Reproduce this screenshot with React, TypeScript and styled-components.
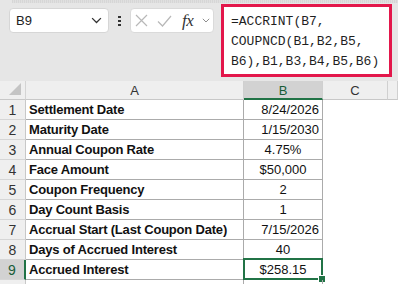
import React from "react";
import styled, { createGlobalStyle } from "styled-components";

const GlobalStyle = createGlobalStyle`
  html, body {
    margin: 0;
    padding: 0;
    background: #ffffff;
    font-family: "Liberation Sans", Arial, sans-serif;
  }
`;

const Page = styled.div`
  width: 398px;
  height: 284px;
  overflow: hidden;
  background: #ffffff;
`;

const TopArea = styled.div`
  height: 81px;
  background: #e6e6e6;
  position: relative;
`;

const Ribbon = styled.div`
  height: 3px;
  margin-left: 12px;
  background: repeating-linear-gradient(90deg, #d6d6d6 0 1px, #e0e0e0 1px 2px);
`;

const FormulaRow = styled.div`
  display: flex;
  align-items: flex-start;
  padding-left: 9px;
`;

const NameBox = styled.div`
  margin-top: 5px;
  width: 100px;
  height: 25px;
  box-sizing: border-box;
  background: #ffffff;
  border: 1px solid #d6d6d6;
  border-radius: 4px;
  display: flex;
  align-items: center;
  justify-content: space-between;
  padding: 0 6px 0 6px;
  font-size: 13px;
  color: #222;
`;

const Dots = styled.div`
  margin: 13px 9px 0 9px;
  width: 3px;
  display: flex;
  flex-direction: column;
  gap: 2px;
  span {
    width: 3px;
    height: 2px;
    background: #333;
  }
`;

const ActionBox = styled.div`
  margin-top: 5px;
  width: 84px;
  height: 25px;
  box-sizing: border-box;
  background: #ffffff;
  border: 1px solid #dadada;
  border-radius: 4px;
  display: flex;
  align-items: center;
  padding-left: 4px;
  gap: 9px;
`;

const Fx = styled.span`
  font-family: "Liberation Serif", "DejaVu Serif", serif;
  font-style: italic;
  font-size: 17px;
  color: #333;
  margin-left: 1px;
  letter-spacing: -0.5px;
`;

const FormulaBox = styled.div`
  margin-left: 7px;
  margin-top: 1px;
  width: 171px;
  height: 73px;
  box-sizing: border-box;
  background: #ffffff;
  border: 3px solid #e3174b;
  padding: 5px 0 0 7px;
  font-family: "Liberation Mono", "DejaVu Sans Mono", monospace;
  font-size: 13px;
  line-height: 20px;
  color: #1f1f1f;
  white-space: pre;
`;

const Sheet = styled.div`
  display: grid;
  grid-template-columns: 26px 218px 79px 65px 10px;
  grid-template-rows: 19px repeat(10, 20px);
  font-size: 13px;
`;

const Corner = styled.div`
  background: #efefef;
  border-right: 1px solid #d4d4d4;
  border-bottom: 1px solid #c8c8c8;
  box-sizing: border-box;
  position: relative;
  &::after {
    content: "";
    position: absolute;
    right: 4px;
    bottom: 4px;
    width: 0;
    height: 0;
    border-left: 12px solid transparent;
    border-bottom: 12px solid #c4c4c4;
  }
`;

const ColHead = styled.div<{ $active?: boolean }>`
  box-sizing: border-box;
  background: ${(p) => (p.$active ? "#d2d2d2" : "#efefef")};
  border-right: 1px solid #d0d0d0;
  border-bottom: ${(p) => (p.$active ? "2px solid #217346" : "1px solid #c8c8c8")};
  color: ${(p) => (p.$active ? "#185c37" : "#333")};
  display: flex;
  align-items: center;
  justify-content: center;
  font-size: 13px;
  padding-top: 1px;
`;

const RowHead = styled.div<{ $active?: boolean }>`
  box-sizing: border-box;
  background: ${(p) => (p.$active ? "#d2d2d2" : "#efefef")};
  border-right: ${(p) => (p.$active ? "2px solid #217346" : "1px solid #c8c8c8")};
  border-bottom: 1px solid #d6d6d6;
  color: ${(p) => (p.$active ? "#185c37" : "#333")};
  display: flex;
  align-items: center;
  justify-content: center;
  font-size: 14px;
`;

const Cell = styled.div<{ $bold?: boolean; $align?: "left" | "center" | "right"; $plain?: boolean }>`
  box-sizing: border-box;
  position: relative;
  border-right: ${(p) => (p.$plain ? "none" : "1px solid #ababab")};
  border-bottom: ${(p) => (p.$plain ? "none" : "1px solid #ababab")};
  font-weight: ${(p) => (p.$bold ? 700 : 400)};
  text-align: ${(p) => p.$align ?? "left"};
  padding: 0 3px;
  line-height: 19px;
  white-space: nowrap;
  overflow: visible;
  color: #111;
  letter-spacing: ${(p) => (p.$bold ? "-0.2px" : "0")};
`;

const Selection = styled.div`
  position: absolute;
  left: -1px;
  top: -2px;
  right: -1px;
  bottom: -1px;
  border: 2px solid #217346;
  pointer-events: none;
  &::after {
    content: "";
    position: absolute;
    right: -5px;
    bottom: -5px;
    width: 6px;
    height: 6px;
    background: #217346;
    border: 1px solid #ffffff;
  }
`;

const Filler = styled.div``;

type Row = { label: string; value: string; align: "center" | "right" };

const rows: Row[] = [
  { label: "Settlement Date", value: "8/24/2026", align: "right" },
  { label: "Maturity Date", value: "1/15/2030", align: "right" },
  { label: "Annual Coupon Rate", value: "4.75%", align: "center" },
  { label: "Face Amount", value: "$50,000", align: "center" },
  { label: "Coupon Frequency", value: "2", align: "center" },
  { label: "Day Count Basis", value: "1", align: "center" },
  { label: "Accrual Start (Last Coupon Date)", value: "7/15/2026", align: "right" },
  { label: "Days of Accrued Interest", value: "40", align: "center" },
  { label: "Accrued Interest", value: "$258.15", align: "center" },
];

const Chevron = ({ size = 10, color = "#333" }: { size?: number; color?: string }) => (
  <svg width={size} height={size * 0.6} viewBox="0 0 10 6">
    <path d="M1 1l4 4 4-4" fill="none" stroke={color} strokeWidth="1.2" />
  </svg>
);

export default function App() {
  return (
    <Page>
      <GlobalStyle />
      <TopArea>
        <Ribbon />
        <FormulaRow>
          <NameBox>
            <span>B9</span>
            <Chevron size={11} />
          </NameBox>
          <Dots>
            <span />
            <span />
            <span />
          </Dots>
          <ActionBox>
            <svg width="13" height="13" viewBox="0 0 13 13">
              <path d="M1 1l11 11M12 1L1 12" stroke="#b8b8b8" strokeWidth="1.2" fill="none" />
            </svg>
            <svg width="15" height="12" viewBox="0 0 15 12">
              <path d="M1 6.5l4.5 4.5L14 1" stroke="#b8b8b8" strokeWidth="1.2" fill="none" />
            </svg>
            <Fx>fx</Fx>
            <Chevron size={8} color="#888" />
          </ActionBox>
          <FormulaBox>{"=ACCRINT(B7,\nCOUPNCD(B1,B2,B5,\nB6),B1,B3,B4,B5,B6)"}</FormulaBox>
        </FormulaRow>
      </TopArea>
      <Sheet>
        <Corner />
        <ColHead>A</ColHead>
        <ColHead $active>B</ColHead>
        <ColHead>C</ColHead>
        <ColHead />
        {rows.map((r, i) => {
          const active = i === rows.length - 1;
          return (
            <React.Fragment key={r.label}>
              <RowHead $active={active}>{i + 1}</RowHead>
              <Cell $bold>{r.label}</Cell>
              <Cell $align={r.align}>
                {r.value}
                {active && <Selection />}
              </Cell>
              <Cell $plain />
              <Filler />
            </React.Fragment>
          );
        })}
        <RowHead />
        <Cell />
        <Cell />
        <Cell $plain />
        <Filler />
      </Sheet>
    </Page>
  );
}
